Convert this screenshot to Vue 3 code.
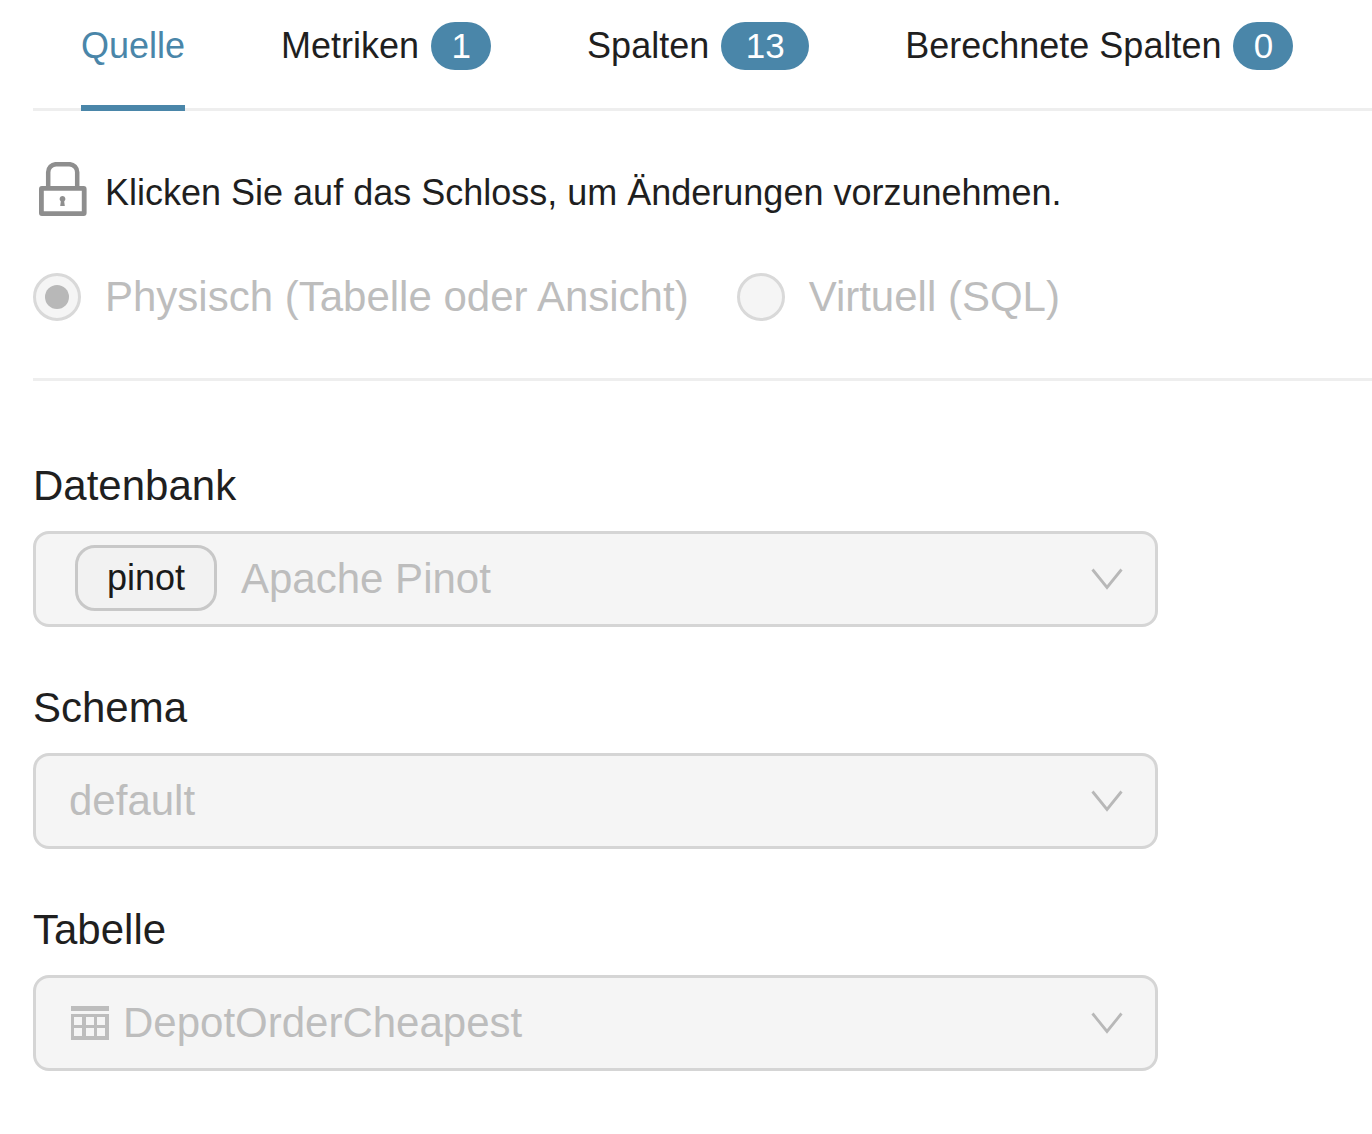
<script setup>
const tabs = [
  { label: 'Quelle', active: true },
  { label: 'Metriken', count: 1 },
  { label: 'Spalten', count: 13 },
  { label: 'Berechnete Spalten', count: 0 },
];

const sourceTypes = [
  { label: 'Physisch (Tabelle oder Ansicht)', checked: true },
  { label: 'Virtuell (SQL)', checked: false },
];
</script>

<template>
  <div class="panel">
    <div class="tabs">
      <div v-for="tab in tabs" :key="tab.label" class="tab" :class="{ active: tab.active }">
        <span>{{ tab.label }}</span>
        <span v-if="tab.count !== undefined" class="badge" :class="{ wide: tab.count > 9 }">{{ tab.count }}</span>
      </div>
    </div>

    <div class="lock-row">
      <svg class="lock" width="48" height="54" viewBox="0 0 48 54" fill="none">
        <path d="M9.200 26V10.500a8 8 0 0 1 8-8.300h13a8 8 0 0 1 8 8.300V26" stroke="#8e8e8e" stroke-width="4.500" />
        <rect x="2.400" y="26.400" width="42.800" height="25.200" rx="0.500" stroke="#8e8e8e" stroke-width="4.800" />
        <path d="M23.500 34a3 3 0 0 1 1.700 5.400l.6 4.600h-4.600l.6-4.600a3 3 0 0 1 1.700-5.400z" fill="#8e8e8e" />
      </svg>
      <span class="lock-text">Klicken Sie auf das Schloss, um Änderungen vorzunehmen.</span>
    </div>

    <div class="radios">
      <label v-for="type in sourceTypes" :key="type.label" class="radio">
        <span class="radio-dot" :class="{ checked: type.checked }"></span>
        <span>{{ type.label }}</span>
      </label>
    </div>

    <div class="fields">
      <div class="field">
        <div class="field-label">Datenbank</div>
        <div class="select db-select">
          <span class="tag">pinot</span>
          <span>Apache Pinot</span>
          <svg class="chevron" width="32" height="22" viewBox="0 0 32 22" fill="none">
            <path d="M1.500 1.500L16 19.500L30.500 1.500" stroke="#b8b8b8" stroke-width="2.800" />
          </svg>
        </div>
      </div>

      <div class="field">
        <div class="field-label">Schema</div>
        <div class="select">
          <span>default</span>
          <svg class="chevron" width="32" height="22" viewBox="0 0 32 22" fill="none">
            <path d="M1.500 1.500L16 19.500L30.500 1.500" stroke="#b8b8b8" stroke-width="2.800" />
          </svg>
        </div>
      </div>

      <div class="field">
        <div class="field-label">Tabelle</div>
        <div class="select table-select">
          <svg class="table-icon" width="38" height="34" viewBox="0 0 38 34" fill="#bdbdbd">
            <rect x="0" y="0" width="38" height="5" />
            <path fill-rule="evenodd" d="M0 8h38v26H0zM3 11v8h8v-8zM15 11v8h8v-8zM26 11v8h8v-8zM3 22v8h8v-8zM15 22v8h8v-8zM26 22v8h8v-8z" />
          </svg>
          <span>DepotOrderCheapest</span>
          <svg class="chevron" width="32" height="22" viewBox="0 0 32 22" fill="none">
            <path d="M1.500 1.500L16 19.500L30.500 1.500" stroke="#b8b8b8" stroke-width="2.800" />
          </svg>
        </div>
      </div>
    </div>
  </div>
</template>

<style scoped>
.panel {
  padding-left: 33px;
  font-family: "Liberation Sans", Arial, sans-serif;
  color: #1f1f1f;
}

.tabs {
  display: flex;
  height: 111px;
  border-bottom: 3px solid #eeeeee;
  box-sizing: border-box;
  font-size: 36px;
}

.tab {
  display: flex;
  align-items: center;
  gap: 12px;
  height: 111px;
  margin: 0 48px;
  padding-bottom: 19px;
  box-sizing: border-box;
  white-space: nowrap;
}

.tab.active {
  color: #4a86a9;
  border-bottom: 6px solid #4a86a9;
  padding-bottom: 13px;
}

.badge {
  width: 60px;
  height: 48px;
  border-radius: 24px;
  background: #4a86a9;
  color: #fff;
  font-size: 35px;
  text-align: center;
  line-height: 48px;
}

.badge.wide {
  width: 88px;
}

.lock-row {
  display: flex;
  align-items: center;
  gap: 18px;
  margin-top: 51px;
  padding-left: 6px;
  height: 54px;
  font-size: 36px;
}

.lock-text {
  padding-top: 8px;
}

.radios {
  display: flex;
  gap: 48px;
  height: 165px;
  padding-top: 57px;
  box-sizing: border-box;
  border-bottom: 3px solid #eeeeee;
  font-size: 42px;
  color: #bdbdbd;
}

.radio {
  display: flex;
  align-items: center;
  gap: 24px;
  height: 48px;
  white-space: nowrap;
}

.radio-dot {
  width: 48px;
  height: 48px;
  box-sizing: border-box;
  border: 3px solid #d9d9d9;
  border-radius: 50%;
  background: #f5f5f5;
  display: flex;
  align-items: center;
  justify-content: center;
}

.radio-dot.checked::after {
  content: "";
  width: 24px;
  height: 24px;
  border-radius: 50%;
  background: #b8b8b8;
}

.fields {
  display: flex;
  flex-direction: column;
  gap: 57px;
  width: 1125px;
  margin-top: 81px;
}

.field-label {
  font-size: 42px;
  line-height: 48px;
  margin-bottom: 21px;
}

.select {
  display: flex;
  align-items: center;
  height: 96px;
  box-sizing: border-box;
  padding: 0 32px 0 33px;
  border: 3px solid #d5d5d5;
  border-radius: 16px;
  background: #f5f5f5;
  color: #bdbdbd;
  font-size: 42px;
}

.db-select {
  padding-left: 39px;
}

.tag {
  display: flex;
  align-items: center;
  justify-content: center;
  width: 142px;
  height: 66px;
  box-sizing: border-box;
  border: 3px solid #c8c8c8;
  border-radius: 20px;
  margin: 0 24px 2px 0;
  background: #f2f2f2;
  color: #1a1a1a;
  font-size: 36px;
}

.table-icon {
  margin: 0 14px 0 2px;
}

.chevron {
  margin-left: auto;
}
</style>

<style>
html,
body {
  background: #fff;
}
</style>
